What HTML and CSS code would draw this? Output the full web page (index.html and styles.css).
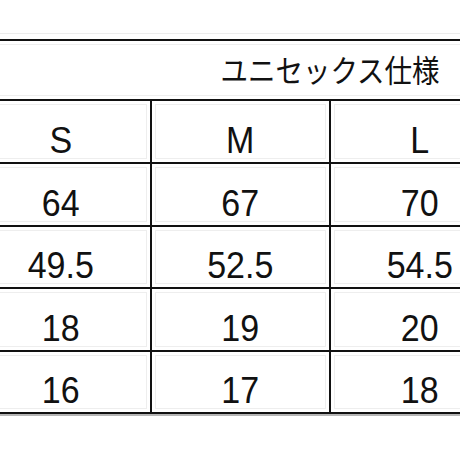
FILE: index.html
```html
<!DOCTYPE html>
<html lang="ja">
<head>
<meta charset="utf-8">
<title>サイズ表</title>
<link rel="stylesheet" href="styles.css">
</head>
<body>
<div class="sheet">
  <div class="grid-above"></div>
  <table class="size-table">
    <tr class="head">
      <th colspan="4"><span>ユニセックス仕様</span></th>
    </tr>
    <tr class="row-63">
      <td><span>S</span></td><td><span>M</span></td><td><span>L</span></td><td></td>
    </tr>
    <tr class="row-63">
      <td><span>64</span></td><td><span>67</span></td><td><span>70</span></td><td></td>
    </tr>
    <tr class="row-62">
      <td><span>49.5</span></td><td><span>52.5</span></td><td><span>54.5</span></td><td></td>
    </tr>
    <tr class="row-63">
      <td><span>18</span></td><td><span>19</span></td><td><span>20</span></td><td></td>
    </tr>
    <tr class="row-62">
      <td><span>16</span></td><td><span>17</span></td><td><span>18</span></td><td></td>
    </tr>
  </table>
  <div class="grid-below"></div>
</div>
</body>
</html>
```

FILE: styles.css
```css
html, body {
  margin: 0;
  padding: 0;
  background: #fff;
  overflow: hidden;
  width: 460px;
  height: 460px;
}

.sheet {
  display: flex;
  flex-direction: column;
}

.grid-above {
  height: 33px;
  border-bottom: 1px solid #ececec;
  margin-bottom: 5px;
}

.size-table {
  border-collapse: collapse;
  table-layout: fixed;
  width: 720px;
  margin-left: -30px;
  color: #111;
  font-family: "Liberation Sans", Arial, sans-serif;
}

.size-table th,
.size-table td {
  border: 2px solid #111;
  padding: 0;
  width: 180px;
  text-align: center;
  box-shadow: inset 0 0 0 3px #fff, inset 0 0 0 4px #eeeeee;
}

.size-table span {
  display: inline-block;
  transform: scaleY(1.1);
}

.head th {
  height: 58px;
  font-family: "Noto Sans CJK JP", sans-serif;
  font-weight: normal;
  font-size: 27.5px;
  line-height: 1;
  vertical-align: middle;
  padding-top: 0;
}

.size-table td {
  font-size: 34px;
  line-height: 34px;
  vertical-align: bottom;
  padding-bottom: 5px;
}

.row-63 td { height: 56px; }
.row-62 td { height: 55px; }

.grid-below {
  height: 0;
  border-top: 2px solid #b5b5b5;
}
```
